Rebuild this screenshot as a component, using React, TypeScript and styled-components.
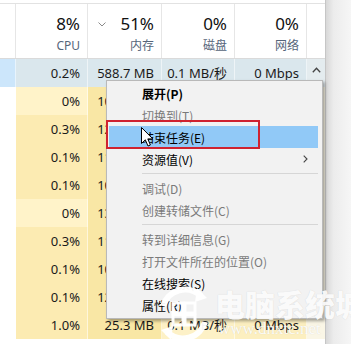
import React from 'react';
import styled, { createGlobalStyle } from 'styled-components';

const GlobalStyle = createGlobalStyle`
  html, body {
    margin: 0;
    padding: 0;
    background: #fff;
  }
  body {
    font-family: 'Noto Sans', 'Noto Sans CJK SC', sans-serif;
    overflow: hidden;
  }
`;

const COLS = '16px 72px 74px 73px 72px 18px';

const Screen = styled.div`
  position: relative;
  width: 351px;
  height: 344px;
  display: flex;
  overflow: hidden;
  background: #fff;
`;

const Pane = styled.div`
  width: 325px;
  flex: none;
  display: flex;
  flex-direction: column;
  padding-top: 3px;
  box-sizing: border-box;
`;

const Backdrop = styled.div`
  flex: 1;
  border-left: 1px solid #c6c6c6;
  background: linear-gradient(to right, #d8d8d8, #ececec 30%, #f6f6f6);
`;

const HeaderRow = styled.div`
  display: grid;
  grid-template-columns: ${COLS};
  height: 54px;
  border-top: 1px solid #e2e2e2;
  border-bottom: 1px solid #dadada;
`;

const HeadCell = styled.div`
  position: relative;
  display: flex;
  flex-direction: column;
  align-items: flex-end;
  padding: 9px 7px 0 0;
  border-right: 1px solid #e6e6e6;
  &:last-child {
    border-right: none;
  }
`;

const HeadValue = styled.span`
  font-size: 17px;
  line-height: 22px;
  color: #111;
`;

const HeadLabel = styled.span`
  margin-top: 4px;
  font-size: 12px;
  line-height: 14px;
  color: #56657a;
`;

const SortMark = styled.svg`
  position: absolute;
  left: 10px;
  top: 18px;
`;

const Row = styled.div`
  display: grid;
  grid-template-columns: ${COLS};
  height: 28px;
  flex: none;
`;

const Cell = styled.div<{ $bg: string }>`
  background: ${({ $bg }) => $bg};
  border-right: 1px solid rgba(255, 255, 255, 0.55);
  padding-right: 7px;
  font-size: 13px;
  line-height: 28px;
  color: #1a1a1a;
  text-align: right;
  white-space: nowrap;
  overflow: hidden;
`;

const ScrollCell = styled.div<{ $bg: string }>`
  display: flex;
  justify-content: center;
  padding-top: 8px;
  box-sizing: border-box;
  background: ${({ $bg }) => $bg};
`;

const Menu = styled.div`
  position: absolute;
  left: 106px;
  top: 80px;
  width: 217px;
  box-sizing: border-box;
  padding: 1px 4px 2px 2px;
  background: #f2f2f2;
  border: 1px solid #b9b9b9;
  box-shadow: 2px 2px 3px rgba(0, 0, 0, 0.35);
  font-family: 'Noto Sans CJK SC', 'Noto Sans', sans-serif;
`;

const Item = styled.div<{ $disabled?: boolean; $bold?: boolean; $active?: boolean }>`
  display: flex;
  align-items: center;
  justify-content: space-between;
  height: 22px;
  padding: 0 10px 0 33px;
  font-size: 12px;
  font-weight: ${({ $bold }) => ($bold ? 700 : 400)};
  color: ${({ $disabled }) => ($disabled ? '#7a7a7a' : '#000')};
  background: ${({ $active }) => ($active ? '#91c9f7' : 'transparent')};
`;

const Separator = styled.div`
  height: 7px;
  display: flex;
  align-items: center;
  padding-left: 33px;
  &::after {
    content: '';
    flex: 1;
    height: 1px;
    background: #d6d6d6;
  }
`;

const Highlight = styled.div`
  position: absolute;
  left: 106px;
  top: 120px;
  width: 154px;
  height: 29px;
  box-sizing: border-box;
  border: 2px solid #cf2230;
`;

const Pointer = styled.svg`
  position: absolute;
  left: 141px;
  top: 127px;
`;

const Watermark = styled.div`
  position: absolute;
  left: 155px;
  top: 284px;
  display: flex;
  gap: 2px;
  pointer-events: none;
  color: rgba(255, 255, 255, 0.92);
`;

const MarkText = styled.div`
  display: flex;
  flex-direction: column;
  padding-top: 2px;
`;

const MarkTitle = styled.span`
  font-family: 'Noto Sans CJK SC', sans-serif;
  font-weight: 900;
  font-size: 30px;
  line-height: 34px;
  white-space: nowrap;
  text-shadow: 0 0 1px rgba(0, 0, 0, 0.14);
`;

const MarkUrl = styled.span`
  font-family: 'Liberation Serif', serif;
  font-size: 17px;
  line-height: 18px;
  padding-left: 3px;
  white-space: nowrap;
  text-shadow: 0 0 1px rgba(0, 0, 0, 0.14);
`;

type Proc = { cpu: string; mem: string; disk: string; net: string; shade: 'light' | 'mid' };

// disk and network cells of rows 2-9 sit under the context menu
const rows: Proc[] = [
  { cpu: '0%', mem: '108.4 MB', disk: '', net: '', shade: 'light' },
  { cpu: '0.3%', mem: '121.6 MB', disk: '', net: '', shade: 'mid' },
  { cpu: '0.1%', mem: '115.2 MB', disk: '', net: '', shade: 'mid' },
  { cpu: '0.1%', mem: '102.9 MB', disk: '', net: '', shade: 'mid' },
  { cpu: '0%', mem: '139.7 MB', disk: '', net: '', shade: 'light' },
  { cpu: '0.3%', mem: '117.3 MB', disk: '', net: '', shade: 'mid' },
  { cpu: '0.1%', mem: '106.8 MB', disk: '', net: '', shade: 'mid' },
  { cpu: '0.1%', mem: '124.5 MB', disk: '', net: '', shade: 'mid' },
  { cpu: '1.0%', mem: '25.3 MB', disk: '0.1 MB/秒', net: '0 Mbps', shade: 'mid' },
];

const cpuBg = { light: '#fff3c9', mid: '#fcebb2' };

const menu: Array<{ label: string; disabled?: boolean; bold?: boolean; active?: boolean; sub?: boolean } | 'sep'> = [
  { label: '展开(P)', bold: true },
  { label: '切换到(T)', disabled: true },
  { label: '结束任务(E)', active: true },
  { label: '资源值(V)', sub: true },
  'sep',
  { label: '调试(D)', disabled: true },
  { label: '创建转储文件(C)', disabled: true },
  'sep',
  { label: '转到详细信息(G)', disabled: true },
  { label: '打开文件所在的位置(O)', disabled: true },
  { label: '在线搜索(S)' },
  { label: '属性(R)' },
];

const headers = [
  { value: '8%', label: 'CPU' },
  { value: '51%', label: '内存', sorted: true },
  { value: '0%', label: '磁盘' },
  { value: '0%', label: '网络' },
];

const App: React.FC = () => {
  return (
    <>
      <GlobalStyle />
      <Screen>
        <Pane>
          <HeaderRow>
            <HeadCell />
            {headers.map((h) => (
              <HeadCell key={h.label}>
                {h.sorted && (
                  <SortMark width="8" height="5" viewBox="0 0 8 5">
                    <path d="M0.5 0.5 L4 4 L7.5 0.5" fill="none" stroke="#8a8a8a" strokeWidth="1" />
                  </SortMark>
                )}
                <HeadValue>{h.value}</HeadValue>
                <HeadLabel>{h.label}</HeadLabel>
              </HeadCell>
            ))}
            <HeadCell />
          </HeaderRow>

          <Row>
            <Cell $bg="#cce6fb" />
            <Cell $bg="#dae7ed">0.2%</Cell>
            <Cell $bg="#dae7ed">588.7 MB</Cell>
            <Cell $bg="#dae7ed">0.1 MB/秒</Cell>
            <Cell $bg="#dae7ed">0 Mbps</Cell>
            <ScrollCell $bg="#e4ecef">
              <svg width="9" height="6" viewBox="0 0 9 6">
                <path d="M0.8 5.2 L4.5 1.2 L8.2 5.2" fill="none" stroke="#444" strokeWidth="1.3" />
              </svg>
            </ScrollCell>
          </Row>

          {rows.map((r, i) => (
            <Row key={i}>
              <Cell $bg="#fff" />
              <Cell $bg={cpuBg[r.shade]}>{r.cpu}</Cell>
              <Cell $bg="#f9e7a5">{r.mem}</Cell>
              <Cell $bg="#fdf1c6">{r.disk}</Cell>
              <Cell $bg="#fcefc0">{r.net}</Cell>
              <ScrollCell $bg="#faf6e6" />
            </Row>
          ))}
        </Pane>
        <Backdrop />

        <Menu>
          {menu.map((m, i) =>
            m === 'sep' ? (
              <Separator key={i} />
            ) : (
              <Item key={i} $disabled={m.disabled} $bold={m.bold} $active={m.active}>
                <span>{m.label}</span>
                {m.sub && (
                  <svg width="5" height="8" viewBox="0 0 5 8">
                    <path d="M0.7 0.7 L4 4 L0.7 7.3" fill="none" stroke="#444" strokeWidth="1.1" />
                  </svg>
                )}
              </Item>
            )
          )}
        </Menu>

        <Highlight />

        <Pointer width="13" height="21" viewBox="0 0 13 21">
          <path
            d="M0.5 0.5 L0.5 16.5 L4.3 12.8 L7 19 L9.4 18 L6.8 11.9 L11.8 11.9 Z"
            fill="#fff"
            stroke="#000"
            strokeWidth="1"
            strokeLinejoin="round"
          />
        </Pointer>

        <Watermark>
          <svg width="58" height="60" viewBox="0 0 58 60">
            <g fill="none" stroke="rgba(255,255,255,0.95)" strokeWidth="6">
              <path d="M8 22 A23 23 0 0 1 46 12" />
              <path d="M50 38 A23 23 0 0 1 12 48" />
            </g>
            <path d="M42 4 L52 14 L40 18 Z" fill="rgba(255,255,255,0.95)" />
            <path d="M16 56 L6 46 L18 42 Z" fill="rgba(255,255,255,0.95)" />
            <g fill="none" stroke="rgba(255,255,255,0.95)" strokeWidth="3">
              <rect x="18" y="19" width="10" height="10" />
              <rect x="30" y="19" width="10" height="10" />
              <rect x="18" y="31" width="10" height="10" />
              <rect x="30" y="31" width="10" height="10" />
            </g>
          </svg>
          <MarkText>
            <MarkTitle>电脑系统城</MarkTitle>
            <MarkUrl>www.dnxtc.net</MarkUrl>
          </MarkText>
        </Watermark>
      </Screen>
    </>
  );
};

export default App;
